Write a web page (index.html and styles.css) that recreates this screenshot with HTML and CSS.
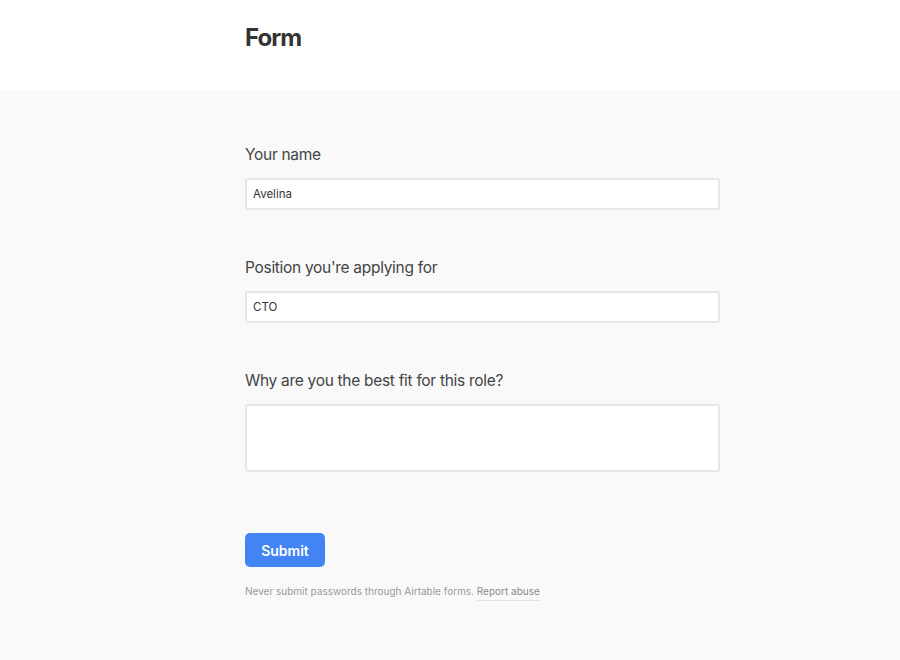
FILE: index.html
```html
<!DOCTYPE html>
<html>
<head>
<meta charset="utf-8">
<link rel="stylesheet" href="styles.css">
</head>
<body>
<header class="header">
  <div class="wrap">
    <h1 class="title">Form</h1>
  </div>
</header>
<main class="main">
  <form class="wrap form">
    <div class="field">
      <label class="label">Your name</label>
      <div class="input">Avelina</div>
    </div>
    <div class="field">
      <label class="label">Position you're applying for</label>
      <div class="input">CTO</div>
    </div>
    <div class="field">
      <label class="label">Why are you the best fit for this role?</label>
      <div class="input textarea"></div>
    </div>
    <div class="actions">
      <button type="button" class="submit">Submit</button>
    </div>
    <p class="note">Never submit passwords through Airtable forms. <a class="report">Report abuse</a></p>
  </form>
</main>
</body>
</html>
```
FILE: styles.css
```css
html, body {
  margin: 0;
  padding: 0;
  height: 100%;
}
body {
  font-family: "Inter", "Liberation Sans", sans-serif;
  color: #333;
  background: #f9f9f9;
}
.wrap {
  max-width: 540px;
  margin: 0 auto;
  padding-left: 65px;
  box-sizing: border-box;
}
.header {
  background: #fff;
  height: 90px;
  box-sizing: border-box;
  padding-top: 22px;
}
.title {
  margin: 0;
  font-size: 24px;
  font-weight: 700;
  letter-spacing: -0.9px;
  line-height: 32px;
  color: #333;
}
.main {
  background: #f9f9f9;
  padding-top: 55px;
  padding-bottom: 40px;
}
.form {
  display: flex;
  flex-direction: column;
}
.field {
  display: flex;
  flex-direction: column;
  gap: 13px;
  margin-bottom: 48px;
}
.label {
  font-size: 15.5px;
  line-height: 20px;
  color: #444;
  letter-spacing: -0.3px;
}
.input {
  height: 32px;
  box-sizing: border-box;
  background: #fff;
  border: 2px solid #e6e6e6;
  border-radius: 3px;
  font-size: 11.5px;
  line-height: 28px;
  padding: 0 6px;
  color: #333;
}
.textarea {
  height: 68px;
}
.actions {
  margin-top: 13px;
}
.submit {
  width: 80px;
  height: 34px;
  border: none;
  border-radius: 5px;
  background: #4284f4;
  color: #fff;
  font-family: inherit;
  font-size: 14px;
  font-weight: 600;
  padding: 0;
}
.note {
  margin: 18px 0 0;
  font-size: 10px;
  color: #9a9a9a;
}
.report {
  color: #8a8a8a;
  border-bottom: 1px solid #e2e2e2;
  padding-bottom: 3px;
}
```
